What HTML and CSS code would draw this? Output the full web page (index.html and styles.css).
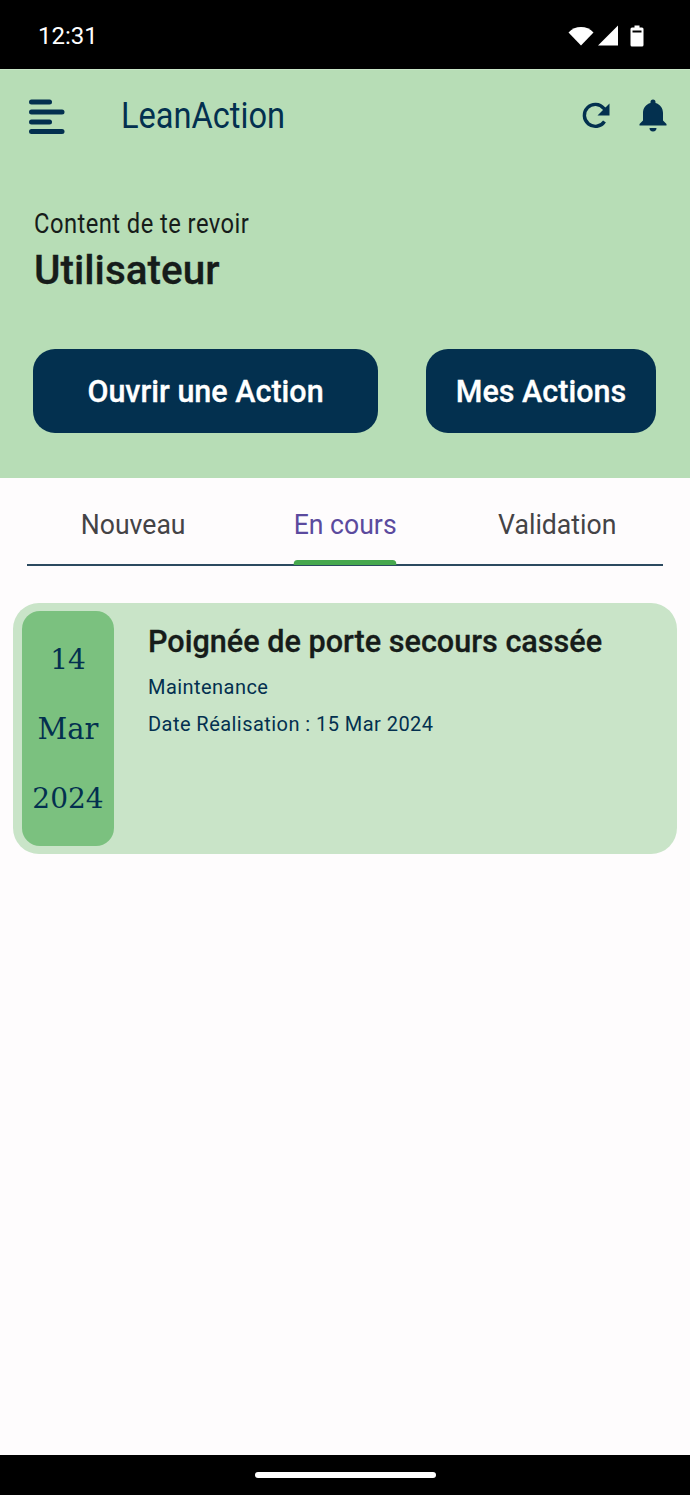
FILE: index.html
```html
<!DOCTYPE html>
<html lang="fr">
<head>
<meta charset="utf-8">
<title>LeanAction</title>
<link rel="stylesheet" href="styles.css">
</head>
<body>
<div class="phone">
  <div class="status-bar">
    <span class="clock">12:31</span>
    <div class="status-icons">
      <svg class="ic-wifi" width="26" height="20" viewBox="0 0 26 20"><path d="M0.500 6.500C4 2.800 8.200 1 13 1s9 1.800 12.500 5.500L13 19.500z" fill="#fff"/></svg>
      <svg class="ic-signal" width="21" height="21" viewBox="0 0 21 21"><path d="M21 0.500V20.500H1z" fill="#fff"/></svg>
      <svg class="ic-battery" width="14" height="22" viewBox="0 0 14 22"><path fill="#fff" fill-rule="evenodd" d="M4.500 0.500h5v2h2.500a1.500 1.500 0 0 1 1.500 1.500v16a1.500 1.500 0 0 1-1.500 1.500h-10A1.500 1.500 0 0 1 0.500 20V4A1.500 1.500 0 0 1 2 2.500h2.500zM2.500 5.500v2h9v-2z"/></svg>
    </div>
  </div>

  <header class="hero">
    <div class="toolbar">
      <svg class="menu-icon" width="36" height="36" viewBox="0 0 36 36">
        <g fill="#03304f">
          <rect x="0" y="1.500" width="23" height="5" rx="2.500"/>
          <rect x="0" y="11.500" width="35.500" height="5" rx="2.500"/>
          <rect x="0" y="21.500" width="23" height="5" rx="2.500"/>
          <rect x="0" y="31" width="35.500" height="5" rx="2.500"/>
        </g>
      </svg>
      <span class="brand">LeanAction</span>
      <div class="toolbar-actions">
        <svg class="refresh" width="28" height="28" viewBox="0 0 28 28"><path fill="none" stroke="#03304f" stroke-width="3.400" d="M22.500 19.500A11 11 0 1 1 21.800 6.300L24 8.500"/><path fill="#03304f" d="M27.500 1.500V13.500H15.500z"/></svg>
        <svg class="bell" width="28" height="33" viewBox="0 0 28 33"><path fill="#03304f" d="M14 0.500a2.500 2.500 0 0 1 2.500 2.500v1c4.700 1.200 7.500 5.200 7.500 10v7.500l3.500 3.500v1.500H0.500V25L4 21.500V14c0-4.800 2.800-8.800 7.500-10V3A2.500 2.500 0 0 1 14 0.500zM10.500 29h7a3.500 3.500 0 0 1-7 0z"/></svg>
      </div>
    </div>
    <p class="greeting">Content de te revoir</p>
    <h1 class="user-name">Utilisateur</h1>
    <div class="hero-buttons">
      <button class="cta cta-open">Ouvrir une Action</button>
      <button class="cta cta-mine">Mes Actions</button>
    </div>
  </header>

  <main class="content">
    <nav class="tabs">
      <div class="tab"><span class="tab-label">Nouveau</span></div>
      <div class="tab tab-active"><span class="tab-label">En cours</span></div>
      <div class="tab"><span class="tab-label">Validation</span></div>
    </nav>

    <article class="action-card">
      <div class="date-box">
        <span class="date-day">14</span>
        <span class="date-month">Mar</span>
        <span class="date-year">2024</span>
      </div>
      <div class="action-body">
        <h2 class="action-title">Poignée de porte secours cassée</h2>
        <p class="action-meta action-service">Maintenance</p>
        <p class="action-meta">Date Réalisation : 15 Mar 2024</p>
      </div>
    </article>
  </main>

  <footer class="nav-bar"><span class="home-pill"></span></footer>
</div>
</body>
</html>
```
FILE: styles.css
```css
* { box-sizing: border-box; }

html, body {
  margin: 0;
  padding: 0;
  background: #fefcfd;
}

.phone {
  width: 690px;
  height: 1495px;
  display: flex;
  flex-direction: column;
  font-family: Roboto, "Liberation Sans", sans-serif;
  overflow: hidden;
}

/* Android status bar */
.status-bar {
  height: 69px;
  flex: none;
  background: #000;
  color: #fff;
  display: flex;
  align-items: center;
  justify-content: space-between;
  padding: 2px 46px 0 38px;
}

.clock {
  font-size: 24px;
  letter-spacing: 0;
}

.status-icons {
  display: flex;
  align-items: center;
  gap: 3px;
}

.ic-battery { margin-left: 9px; }

/* Green header */
.hero {
  height: 409px;
  flex: none;
  background: #b7ddb6;
  border-top: 1px solid #c9e6c8;
  padding: 0 34px;
}

.toolbar {
  display: flex;
  align-items: center;
  height: 91px;
  margin-left: -5px;
}

.menu-icon { flex: none; }

.brand {
  margin-left: 56px;
  font-size: 36px;
  color: #03304f;
  display: inline-block;
  transform: scaleX(0.905);
  transform-origin: left center;
}

.toolbar-actions {
  margin-left: auto;
  margin-right: -11px;
  display: flex;
  align-items: center;
  gap: 29px;
}

.greeting {
  margin: 48px 0 0;
  font-size: 27px;
  line-height: 30px;
  letter-spacing: 0.5px;
  color: #161c1a;
  transform: scaleX(0.88);
  transform-origin: left center;
}

.user-name {
  margin: 7px 0 0;
  font-size: 41px;
  line-height: 48px;
  font-weight: 500;
  color: #161c1a;
  -webkit-text-stroke: 0.3px #161c1a;
  transform: scaleX(0.987);
  transform-origin: left center;
}

.hero-buttons {
  display: flex;
  justify-content: space-between;
  margin-top: 55px;
  margin-left: -1px;
}

.cta {
  height: 84px;
  border: none;
  border-radius: 22px;
  background: #03304f;
  color: #fff;
  font-family: inherit;
  font-size: 30.500px;
  font-weight: 500;
  -webkit-text-stroke: 0.3px #fff;
  padding: 0;
}

.cta-open { width: 345px; }
.cta-mine { width: 230px; }

/* Tabs and list */
.content {
  flex: 1;
  background: #fefcfd;
}

.tabs {
  margin: 0 27px;
  height: 88px;
  border-bottom: 2px solid #2c4a60;
  display: grid;
  grid-template-columns: repeat(3, 1fr);
}

.tab {
  display: flex;
  justify-content: center;
  padding-top: 30px;
  font-size: 28px;
  line-height: 34px;
  color: #444346;
}

.tab-label {
  display: inline-block;
  transform: scaleX(0.95);
}

.tab-active { color: #5b4a9e; }

/* Green marker sitting on the tab rule */
.tab-active .tab-label {
  position: relative;
}

.tab-active .tab-label::after {
  content: "";
  position: absolute;
  left: 0;
  right: 0;
  top: 52px;
  height: 5px;
  border-radius: 4px 4px 0 0;
  background: #47a84e;
}

.action-card {
  margin: 37px 13px 0;
  height: 251px;
  border-radius: 26px;
  background: #c9e4c8;
  padding: 8px 9px;
  display: flex;
}

.date-box {
  width: 92px;
  flex: none;
  border-radius: 18px;
  background: #7bc17f;
  color: #03304f;
  font-family: "DejaVu Serif", "Liberation Serif", serif;
  display: flex;
  flex-direction: column;
  align-items: center;
}

.date-day { margin-top: 32px; font-size: 28px; line-height: 34px; }
.date-month { margin-top: 35px; font-size: 29px; line-height: 34px; }
.date-year { margin-top: 36px; font-size: 28px; line-height: 34px; }

.action-body {
  margin-left: 34px;
  min-width: 0;
}

.action-title {
  margin: 13px 0 0;
  font-size: 30.600px;
  line-height: 36px;
  font-weight: 500;
  color: #161c1a;
  -webkit-text-stroke: 0.3px #161c1a;
}

.action-meta {
  margin: 0;
  font-size: 20px;
  line-height: 26px;
  letter-spacing: 0.45px;
  color: #03304f;
}

.action-service { margin-top: 14px; margin-bottom: 11px; }

/* Gesture bar */
.nav-bar {
  height: 40px;
  flex: none;
  background: #000;
  display: flex;
  justify-content: center;
  padding-top: 17px;
}

.home-pill {
  width: 181px;
  height: 6px;
  border-radius: 3px;
  background: #fff;
}
```
